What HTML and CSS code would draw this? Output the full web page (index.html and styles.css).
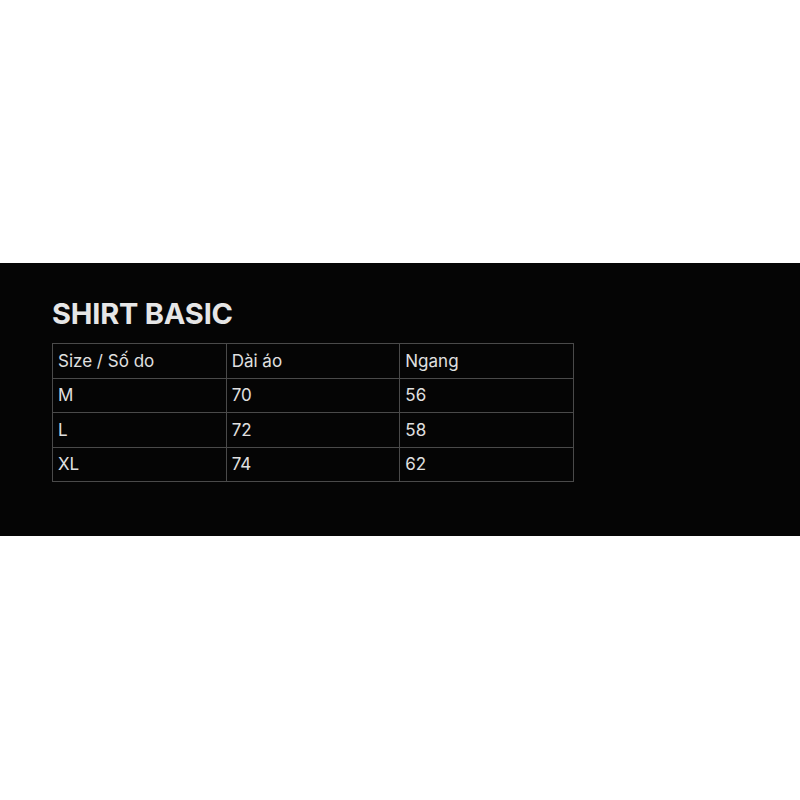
FILE: index.html
```
<!DOCTYPE html>
<html lang="vi">
<head>
<meta charset="utf-8">
<title>Shirt Basic</title>
<link rel="stylesheet" href="styles.css">
</head>
<body>
<section class="band">
  <h1 class="title">SHIRT BASIC</h1>
  <table class="sizes">
    <tr><td>Size / Số do</td><td>Dài áo</td><td>Ngang</td></tr>
    <tr><td>M</td><td>70</td><td>56</td></tr>
    <tr><td>L</td><td>72</td><td>58</td></tr>
    <tr><td>XL</td><td>74</td><td>62</td></tr>
  </table>
</section>
</body>
</html>
```
FILE: styles.css
```
html, body {
  margin: 0;
  padding: 0;
  background: #ffffff;
}
body {
  font-family: Inter, "Noto Sans", sans-serif;
}
.band {
  margin-top: 263px;
  height: 273px;
  box-sizing: border-box;
  background: #050505;
  padding: 33px 0 0 52px;
}
.title {
  margin: 0 0 12px 0;
  font-size: 29px;
  font-weight: 700;
  line-height: normal;
  color: #e6e6e6;
  letter-spacing: -0.2px;
}
.sizes {
  border-collapse: collapse;
  table-layout: fixed;
  width: 522px;
}
.sizes td {
  border: 1px solid #4a4a4a;
  height: 34.5px;
  padding: 0 0 0 5px;
  box-sizing: border-box;
  color: #e0e0e0;
  font-size: 17px;
  font-weight: 400;
  vertical-align: middle;
}
```
